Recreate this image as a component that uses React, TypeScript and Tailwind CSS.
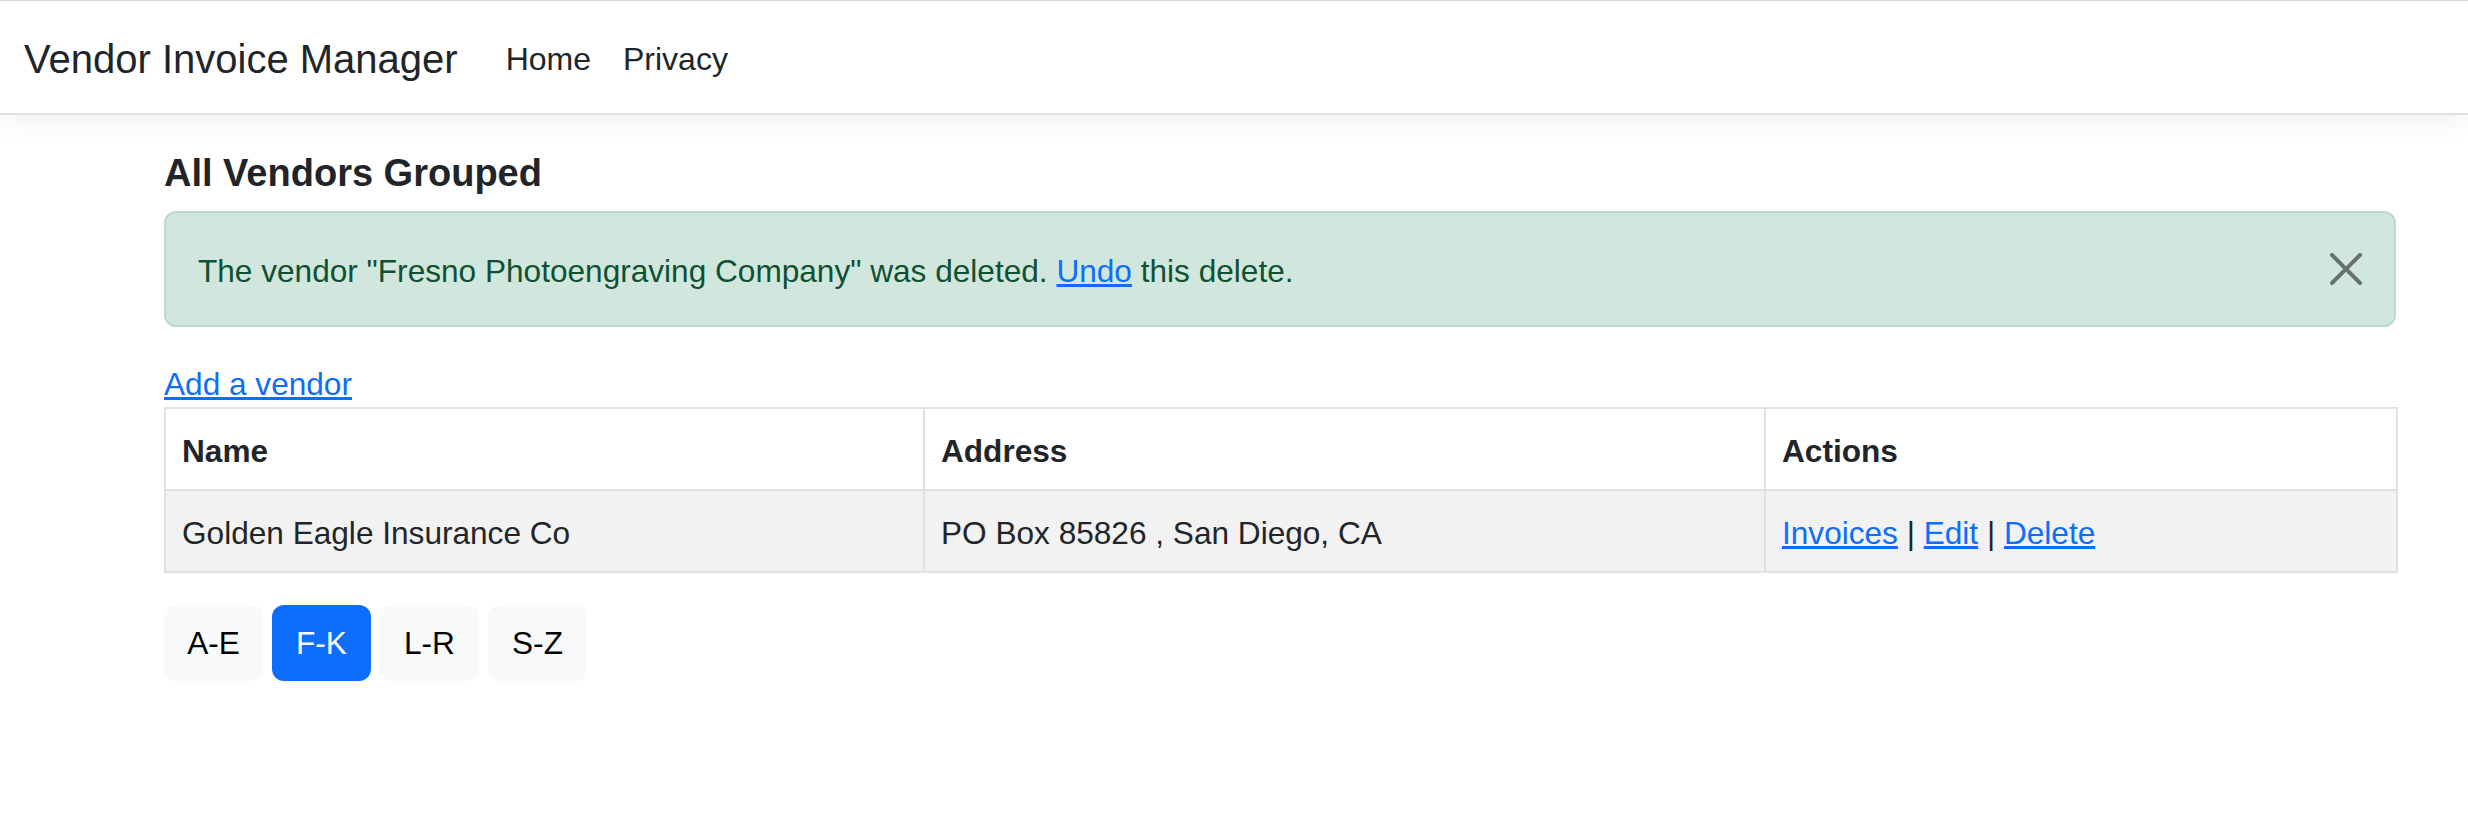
import React from "react";

const vendors = [
	{ name: "Golden Eagle Insurance Co", address: "PO Box 85826 , San Diego, CA" },
];

const groups = ["A-E", "F-K", "L-R", "S-Z"];

function CloseIcon() {
	return (
		<svg className="h-[32px] w-[32px] opacity-50" fill="#000" viewBox="0 0 16 16">
			<path d="M.293.293a1 1 0 0 1 1.414 0L8 6.586 14.293.293a1 1 0 1 1 1.414 1.414L9.414 8l6.293 6.293a1 1 0 0 1-1.414 1.414L8 9.414l-6.293 6.293a1 1 0 0 1-1.414-1.414L6.586 8 .293 1.707a1 1 0 0 1 0-1.414z" />
		</svg>
	);
}

export default function App() {
	return (
		<div className="min-h-[826px] bg-white font-['Liberation_Sans',Arial,sans-serif] text-[#212529]">
			<header className="border-t border-[#d6d6d6] border-b-2 border-b-[#dee2e6] bg-white shadow-[0_8px_24px_rgba(0,0,0,0.05)]">
				<nav className="flex h-[112px] items-center px-[24px] pt-[4px]">
					<span className="mr-[32px] text-[40px] leading-[60px] text-[#212529]">
						Vendor Invoice Manager
					</span>
					<div className="flex items-center">
						<a className="px-[16px] text-[32px] leading-[48px] text-[#212529]" href="#">
							Home
						</a>
						<a className="px-[16px] text-[32px] leading-[48px] text-[#212529]" href="#">
							Privacy
						</a>
					</div>
				</nav>
			</header>

			<main className="pt-[34px] pl-[164px]">
				<div className="w-[2232px]">
					<h5 className="mb-[14px] text-[38px] leading-[48px] font-bold">All Vendors Grouped</h5>

					<div
						className="mb-[32px] flex items-center justify-between rounded-[12px] border-2
							border-[#badbcc] bg-[#d1e7dd] pt-[34px] pr-[32px] pb-[30px] pl-[32px] text-[#0f5132]"
					>
						<p className="text-[31.6px] leading-[48px]">
							The vendor "Fresno Photoengraving Company" was deleted.{" "}
							<a className="text-[#0d6efd] underline" href="#">
								Undo
							</a>{" "}
							this delete.
						</p>
						<button className="-mt-[4px] flex h-[32px] w-[32px] items-center justify-center" type="button">
							<CloseIcon />
						</button>
					</div>

					<div className="h-[48px] pt-[2px] text-[31.6px] leading-[46px]">
						<a className="text-[#0d6efd] underline" href="#">
							Add a vendor
						</a>
					</div>

					<table className="mb-[32px] w-[2232px] table-fixed border-collapse text-[31.6px] leading-[48px]">
						<colgroup>
							<col className="w-[759px]" />
							<col className="w-[841px]" />
							<col className="w-[632px]" />
						</colgroup>
						<thead>
							<tr className="bg-white">
								<th className="border-2 border-[#dee2e6] px-[16px] pt-[18px] pb-[14px] text-left font-bold">Name</th>
								<th className="border-2 border-[#dee2e6] px-[16px] pt-[18px] pb-[14px] text-left font-bold">Address</th>
								<th className="border-2 border-[#dee2e6] px-[16px] pt-[18px] pb-[14px] text-left font-bold">Actions</th>
							</tr>
						</thead>
						<tbody>
							{vendors.map((v) => (
								<tr className="bg-[#f2f2f2]" key={v.name}>
									<td className="border-2 border-[#dee2e6] px-[16px] pt-[18px] pb-[14px]">{v.name}</td>
									<td className="border-2 border-[#dee2e6] px-[16px] pt-[18px] pb-[14px]">{v.address}</td>
									<td className="border-2 border-[#dee2e6] px-[16px] pt-[18px] pb-[14px]">
										<a className="text-[#0d6efd] underline" href="#">
											Invoices
										</a>{" "}
										|{" "}
										<a className="text-[#0d6efd] underline" href="#">
											Edit
										</a>{" "}
										|{" "}
										<a className="text-[#0d6efd] underline" href="#">
											Delete
										</a>
									</td>
								</tr>
							))}
						</tbody>
					</table>

					<div className="flex gap-[9px]">
						{groups.map((g) => (
							<a
								className={
									g === "F-K"
										? "flex h-[76px] w-[99px] items-center justify-center rounded-[12px] bg-[#0d6efd] pt-[2px] text-[31.6px] text-white"
										: "flex h-[76px] w-[99px] items-center justify-center rounded-[12px] bg-[#f8f9fa] pt-[2px] text-[31.6px] text-black"
								}
								href="#"
								key={g}
							>
								{g}
							</a>
						))}
					</div>
				</div>
			</main>
		</div>
	);
}
